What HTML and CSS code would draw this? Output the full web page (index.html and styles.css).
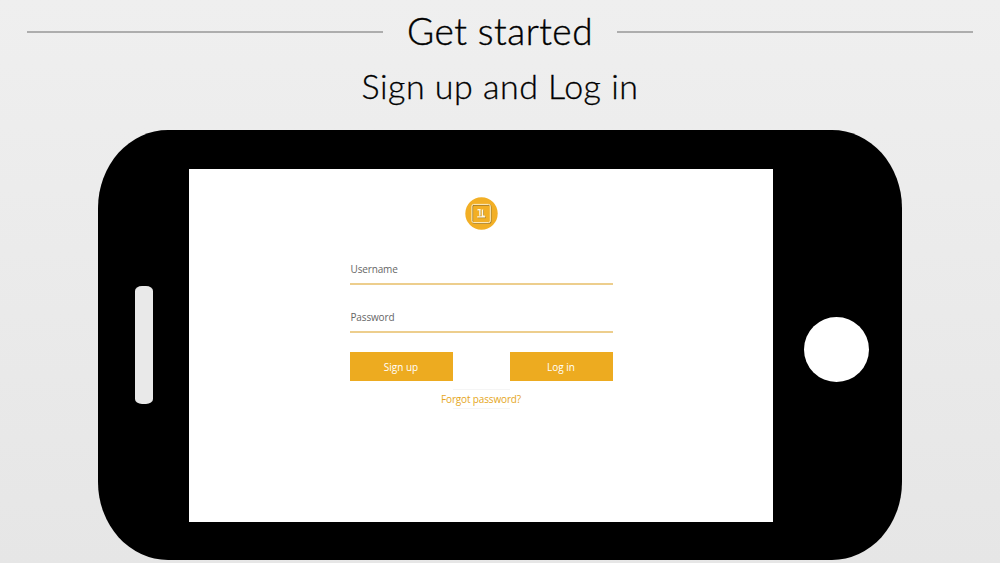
FILE: index.html
```html
<!DOCTYPE html>
<html lang="en">
<head>
    <meta charset="UTF-8">
    <meta name="viewport" content="width=device-width, initial-scale=1.0">
    <title>Get started</title>
    <link rel="stylesheet" href="styles.css">
</head>
<body>
    <header class="header">
        <div class="title-row">
            <span class="rule"></span>
            <h1 class="title">Get started</h1>
            <span class="rule"></span>
        </div>
        <h2 class="subtitle">Sign up and Log in</h2>
    </header>

    <div class="phone">
        <div class="side side-left">
            <div class="speaker"></div>
        </div>

        <main class="screen">
            <svg class="logo" width="33" height="33" viewBox="0 0 33 33">
                <circle cx="16.5" cy="16.5" r="16.2" fill="#f2af25"/>
                <rect x="7.6" y="8.1" width="18.4" height="18.2" rx="1.8" fill="none" stroke="#9c7a30" stroke-width="1.1"/>
                <rect x="6.9" y="7.4" width="18.4" height="18.2" rx="1.8" fill="none" stroke="#fff0c8" stroke-width="1"/>
                <path d="M13.2 13.5h2.4v6M12.8 20.7h8M18.2 13.2v6.8h2.4" fill="none" stroke="#9c7a30" stroke-width="1"/>
                <path d="M12.5 12.8h2.4v6M12.2 19.9h8M17.5 12.4v6.8h2.2" fill="none" stroke="#fff8e4" stroke-width="1.4"/>
            </svg>

            <form class="form">
                <label class="field">Username</label>
                <label class="field">Password</label>
                <div class="buttons">
                    <button class="btn" type="button">Sign up</button>
                    <button class="btn" type="button">Log in</button>
                </div>
                <div class="forgot">
                    <a class="forgot-link">Forgot password?</a>
                </div>
            </form>
        </main>

        <div class="side side-right">
            <div class="home"></div>
        </div>
    </div>
</body>
</html>
```
FILE: styles.css
```css
* {
    margin: 0;
    padding: 0;
    box-sizing: border-box;
}

body {
    height: 563px;
    overflow: hidden;
    background: linear-gradient(#efefef, #e6e6e6);
    font-family: "Open Sans", sans-serif;
}

.header {
    height: 130px;
    padding: 8px 27px 0;
    font-family: "Lato", sans-serif;
    color: #000;
    text-align: center;
}

.title-row {
    display: flex;
    align-items: center;
    justify-content: space-between;
    height: 48px;
}

.rule {
    width: 356px;
    height: 2px;
    background: #adadad;
}

.title {
    padding-bottom: 2px;
    font-size: 37px;
    font-weight: 300;
    line-height: 46px;
    letter-spacing: 0.5px;
    white-space: nowrap;
    -webkit-text-stroke: 0.4px #000;
}

.subtitle {
    margin-top: 6px;
    font-size: 34px;
    font-weight: 300;
    line-height: 48px;
    letter-spacing: 0.5px;
    white-space: nowrap;
    -webkit-text-stroke: 0.3px #000;
}

.phone {
    display: flex;
    align-items: center;
    width: 804px;
    height: 430px;
    margin: 0 auto;
    background: #000;
    border-radius: 70px / 78px;
}

.side {
    display: flex;
    justify-content: center;
}

.side-left {
    width: 91px;
}

.side-right {
    width: 129px;
    padding: 9px 3px 0 0;
}

.speaker {
    width: 18px;
    height: 118px;
    background: #e9e9e9;
    border-radius: 7px / 5px;
}

.home {
    width: 65px;
    height: 65px;
    background: #fff;
    border-radius: 50%;
}

.screen {
    display: flex;
    flex-direction: column;
    align-items: center;
    width: 584px;
    height: 353px;
    padding-top: 28px;
    background: #fff;
}

.logo {
    display: block;
}

.form {
    width: 263px;
    margin-top: 26px;
    font-size: 10px;
    letter-spacing: -0.15px;
}

.field {
    display: block;
    height: 29px;
    padding-left: 1px;
    border-bottom: 2px solid #edce8d;
    line-height: 26px;
    color: #666;
}

.field + .field {
    margin-top: 19px;
}

.buttons {
    display: flex;
    justify-content: space-between;
    margin-top: 19px;
}

.btn {
    width: 103px;
    height: 29px;
    padding-top: 1px;
    border: none;
    background: #edab20;
    font-family: inherit;
    font-size: inherit;
    color: #fff;
}

.forgot {
    display: flex;
    justify-content: center;
    width: 57px;
    height: 20px;
    margin: 8px auto 0;
    border-top: 1px solid #f5f5f5;
    border-bottom: 1px solid #f5f5f5;
}

.forgot-link {
    line-height: 18px;
    color: #e5a622;
    white-space: nowrap;
}
```
